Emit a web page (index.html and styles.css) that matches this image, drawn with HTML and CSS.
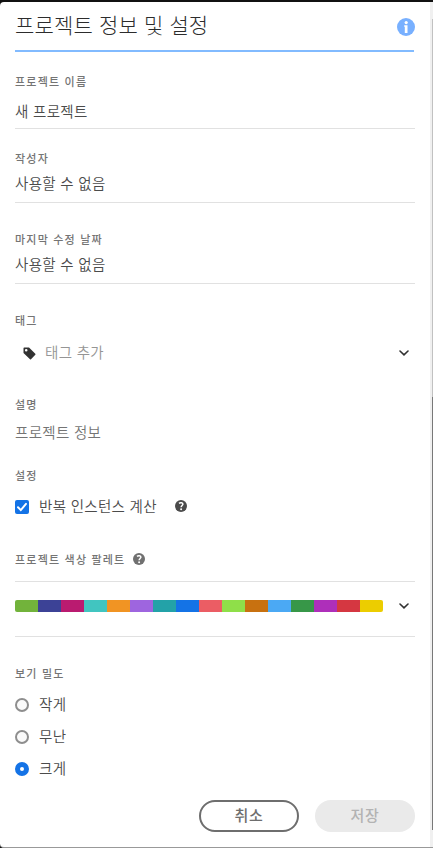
FILE: index.html
```html
<!DOCTYPE html>
<html lang="ko">
<head>
<meta charset="utf-8">
<title>프로젝트 정보 및 설정</title>
<link rel="stylesheet" href="styles.css">
</head>
<body>
<div class="shell">
<main class="panel">
  <header class="header">
    <h1>프로젝트 정보 및 설정</h1>
    <svg class="info" viewBox="0 0 18 18"><circle cx="9" cy="9" r="9" fill="#78b0ff"/><circle cx="9.2" cy="4.6" r="1.6" fill="#fff"/><path d="M7.2 7.2h3.3V15H7.8V8.8h-.6z" fill="#fff"/></svg>
  </header>
  <section class="field name"><h2>프로젝트 이름</h2><p>새 프로젝트</p></section>
  <section class="field author"><h2>작성자</h2><p>사용할 수 없음</p></section>
  <section class="field modified"><h2>마지막 수정 날짜</h2><p>사용할 수 없음</p></section>
  <section class="tags">
    <h2>태그</h2>
    <div class="tag-row">
      <svg class="tag" viewBox="0 0 13 13"><path fill-rule="evenodd" d="M.5 1.3Q.5.5 1.3.5H6l6.3 6.2q.5.5 0 1L8 12.2q-.5.5-1 0L.5 6zM3.2 1.9a1.3 1.3 0 1 0 0 2.6 1.3 1.3 0 0 0 0-2.6z" fill="#323232"/></svg>
      <p>태그 추가</p>
      <svg class="chevron" viewBox="0 0 10 6"><path d="M1 1l4 3.8L9 1" fill="none" stroke="#323232" stroke-width="1.6" stroke-linecap="round"/></svg>
    </div>
  </section>
  <section class="description"><h2>설명</h2><p>프로젝트 정보</p></section>
  <section class="settings">
    <h2>설정</h2>
    <div class="check-row">
      <svg class="checkbox" viewBox="0 0 14 14"><rect width="14" height="14" rx="2" fill="#1473e6"/><path d="M3 7.2l2.8 2.9L11 3.9" fill="none" stroke="#fff" stroke-width="2" stroke-linecap="round"/></svg>
      <p>반복 인스턴스 계산</p>
      <svg class="help dark" viewBox="0 0 12 12"><circle cx="6" cy="6" r="6"/><path d="M4 3.3C5.2 2.3 8 2.5 7.9 4.3 7.8 5.5 6.1 5.6 6.1 7.3"/><circle class="dot" cx="6.1" cy="9.3" r="1"/></svg>
    </div>
  </section>
  <section class="palette">
    <div class="label-row"><h2>프로젝트 색상 팔레트</h2><svg class="help" viewBox="0 0 12 12"><circle cx="6" cy="6" r="6"/><path d="M4 3.3C5.2 2.3 8 2.5 7.9 4.3 7.8 5.5 6.1 5.6 6.1 7.3"/><circle class="dot" cx="6.1" cy="9.3" r="1"/></svg></div>
    <div class="palette-row">
      <div class="swatches"><i class="c1"></i><i class="c2"></i><i class="c3"></i><i class="c4"></i><i class="c5"></i><i class="c6"></i><i class="c7"></i><i class="c8"></i><i class="c9"></i><i class="c10"></i><i class="c11"></i><i class="c12"></i><i class="c13"></i><i class="c14"></i><i class="c15"></i><i class="c16"></i></div>
      <svg class="chevron" viewBox="0 0 10 6"><path d="M1 1l4 3.8L9 1" fill="none" stroke="#323232" stroke-width="1.6" stroke-linecap="round"/></svg>
    </div>
  </section>
  <section class="density">
    <h2>보기 밀도</h2>
    <label class="option"><span class="radio"></span><span class="text">작게</span></label>
    <label class="option"><span class="radio"></span><span class="text">무난</span></label>
    <label class="option"><span class="radio selected"></span><span class="text">크게</span></label>
  </section>
  <footer class="actions"><button class="cancel">취소</button><button class="save" disabled>저장</button></footer>
</main>
<aside class="scroll"><span class="track"></span><span class="thumb"></span></aside>
</div>
</body>
</html>
```
FILE: styles.css
```css
* { box-sizing: border-box; }
body { margin: 0; background: #111; font-family: "Noto Sans CJK KR", sans-serif; overflow: hidden; }
.shell { display: flex; height: 848px; padding-top: 2px; }
.panel { width: 430px; height: 846px; padding: 0 15px; background: #fff; border-bottom: 1px solid #999; border-radius: 4px 0 0 4px; }
h1, h2, p { margin: 0; white-space: nowrap; }
.header { display: flex; justify-content: space-between; height: 50px; margin-right: 1px; border-bottom: 2px solid #82bbff; }
h1 { font-size: 21px; font-weight: 300; line-height: 45px; color: #2c2c2c; letter-spacing: .15px; }
.info { width: 18px; height: 18px; margin: 16px -1px 0 0; }
h2 { height: 18px; font-size: 11px; font-weight: 500; line-height: 18px; letter-spacing: 1.2px; color: #747474; }
p, .option { font-size: 14.5px; font-weight: 350; line-height: 22px; letter-spacing: .3px; color: #4b4b4b; }
.field { border-bottom: 1px solid #e1e1e1; }
.name { height: 77px; padding-top: 20px; }
.name p { margin-top: 10px; }
.author { height: 74px; padding-top: 20px; }
.author p, .modified p { margin-top: 5px; }
.modified { height: 81px; padding-top: 27px; }
.tags { height: 84px; padding-top: 27px; }
.tag-row { display: flex; align-items: center; height: 22px; margin-top: 13px; padding: 0 6px 0 8px; }
.tag { width: 13px; height: 13px; margin-right: 9px; }
.tag-row p { margin-top: -3px; color: #959595; }
.description { height: 80px; padding-top: 27px; }
.chevron { width: 10px; height: 6px; margin-left: auto; }
.description p { margin-top: 8px; color: #747474; }
.settings { height: 76px; padding-top: 18px; }
.check-row { display: flex; align-items: center; height: 22px; margin-top: 12px; }
.check-row p { margin-top: -3px; }
.checkbox { width: 14px; height: 14px; margin-right: 10px; }
.help { width: 12px; height: 12px; fill: #707070; }
.help.dark { margin: -2px 0 0 18px; fill: #4b4b4b; }
.help path { fill: none; stroke: #fff; stroke-width: 1.5; }
.help .dot { fill: #fff; }
.palette { height: 113px; padding-top: 26px; }
.label-row { display: flex; align-items: center; height: 18px; gap: 8px; }
.palette-row { display: flex; align-items: center; height: 56px; margin-top: 13px; padding: 0 6px 7px 0; border-top: 1px solid #e1e1e1; border-bottom: 1px solid #e1e1e1; }
.swatches { display: flex; width: 368px; height: 12px; border-radius: 2px; overflow: hidden; }
.swatches i { flex: 1; }
.c1 { background: #72b33b; } .c2 { background: #3c4296; } .c3 { background: #ba1b70; } .c4 { background: #41c5c0; }
.c5 { background: #f19423; } .c6 { background: #9e65df; } .c7 { background: #23a2a8; } .c8 { background: #1473e6; }
.c9 { background: #eb5d64; } .c10 { background: #8fdf49; } .c11 { background: #c87110; } .c12 { background: #4ba9f4; }
.c13 { background: #379748; } .c14 { background: #ae2fba; } .c15 { background: #d53741; } .c16 { background: #eccd00; }
.density { height: 146px; padding-top: 27px; }
.density h2 { margin-bottom: 7px; }
.option { display: flex; align-items: center; height: 32px; }
.option .text { margin-top: -3px; }
.radio { width: 14px; height: 14px; margin-right: 10px; border: 2px solid #8e8e8e; border-radius: 50%; background: #fafafa; }
.radio.selected { border: 5px solid #1473e6; background: #fff; }
.actions { display: flex; justify-content: flex-end; gap: 16px; margin-top: 17px; }
button { width: 100px; height: 32px; padding: 0 0 2px; border-radius: 16px; font-family: inherit; font-size: 15px; font-weight: 500; line-height: 26px; letter-spacing: .8px; }
.cancel { border: 2px solid #6e6e6e; color: #6e6e6e; background: #fff; }
.save { border: 0; color: #b3b3b3; background: #eaeaea; }
.scroll { width: 3px; background: #f0f0f0; padding-left: 2px; border-bottom: 1px solid #999; }
.scroll span { display: block; }
.track { height: 378px; margin-top: 17px; background: #c1c1c1; }
.thumb { height: 433px; background: #787878; }
```
